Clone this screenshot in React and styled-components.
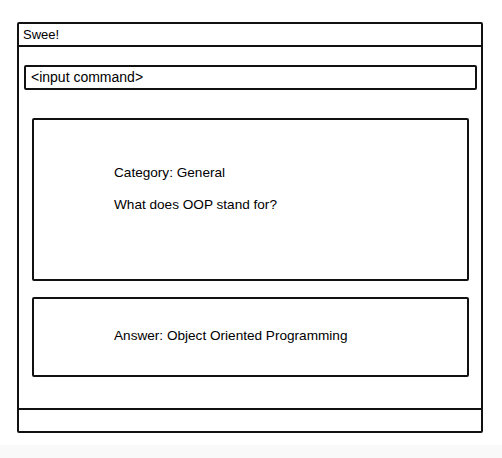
import styled, { createGlobalStyle } from 'styled-components'

const GlobalStyle = createGlobalStyle`
  html, body {
    margin: 0;
    padding: 0;
    background: #f9f9f9;
  }
  body {
    font-family: "Liberation Sans", Arial, sans-serif;
    color: #000;
  }
`

const Canvas = styled.div`
  background: #fff;
  height: 445px;
  padding: 22px 0 0 17px;
  box-sizing: border-box;
`

const Window = styled.div`
  width: 466px;
  height: 411px;
  box-sizing: border-box;
  border: 2px solid #111;
  border-radius: 2px;
  display: flex;
  flex-direction: column;
`

const TitleBar = styled.div`
  height: 23px;
  box-sizing: border-box;
  border-bottom: 2px solid #111;
  padding: 0 4px;
  font-size: 13px;
  line-height: 21px;
`

const Body = styled.div`
  flex: 1;
  display: flex;
  flex-direction: column;
  padding: 18px 4px 0 5px;
`

const CommandInput = styled.div`
  height: 25px;
  box-sizing: border-box;
  border: 2px solid #111;
  border-radius: 2px;
  padding: 0 5px;
  font-size: 14px;
  line-height: 21px;
`

const Card = styled.div`
  margin: ${p => p.$gap}px 8px 0 8px;
  height: ${p => p.$h}px;
  box-sizing: border-box;
  border: 2px solid #111;
  border-radius: 2px;
  padding: ${p => p.$pad}px 0 0 80px;
  display: flex;
  flex-direction: column;
  gap: 16px;
  font-size: 13.6px;
  line-height: 16px;
`

const Footer = styled.div`
  height: 23px;
  box-sizing: border-box;
  border-top: 2px solid #111;
`

export default function App() {
  return (
    <>
      <GlobalStyle />
      <Canvas>
        <Window>
          <TitleBar>Swee!</TitleBar>
          <Body>
            <CommandInput>&lt;input command&gt;</CommandInput>
            <Card $gap={28} $h={163} $pad={45}>
              <span>Category: General</span>
              <span>What does OOP stand for?</span>
            </Card>
            <Card $gap={16} $h={80} $pad={29}>
              <span>Answer: Object Oriented Programming</span>
            </Card>
          </Body>
          <Footer />
        </Window>
      </Canvas>
    </>
  )
}
